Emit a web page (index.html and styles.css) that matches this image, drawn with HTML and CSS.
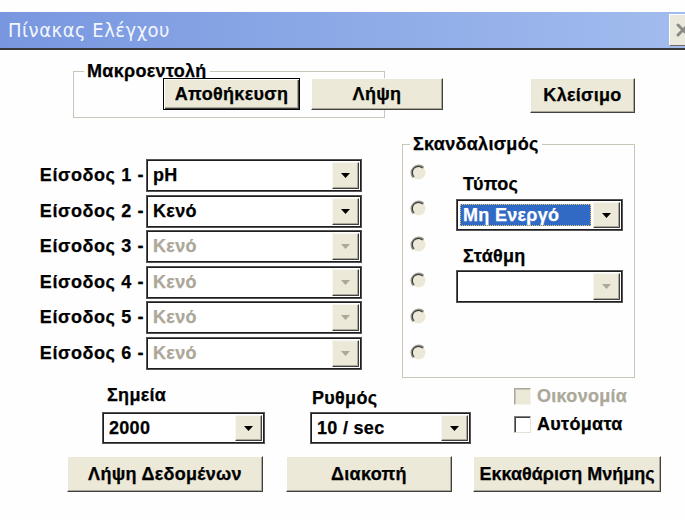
FILE: index.html
```html
<!DOCTYPE html>
<html lang="el">
<head>
<meta charset="utf-8">
<title>Πίνακας Ελέγχου</title>
<link rel="stylesheet" href="styles.css">
</head>
<body>
<div class="top-gap"></div>
<header class="titlebar">
  <span class="title">Πίνακας Ελέγχου</span>
  <span class="close" aria-label="Κλείσιμο">
    <svg width="14" height="14" viewBox="0 0 14 14"><path d="M2 2L12 12M12 2L2 12" stroke="#8a8a86" stroke-width="3" stroke-linecap="round"/></svg>
  </span>
</header>

<main class="dialog">
  <div class="top-row">
    <fieldset class="group macro">
      <legend>Μακροεντολή</legend>
      <div class="macro-body">
        <button class="btn default btn-save">Αποθήκευση</button>
        <button class="btn btn-load">Λήψη</button>
      </div>
    </fieldset>
    <button class="btn btn-close">Κλείσιμο</button>
  </div>

  <div class="main-row">
    <div class="inputs">
      <span class="in-label">Είσοδος 1 -</span>
      <div class="combo"><span class="combo-text">pH</span><span class="combo-btn"><svg width="9" height="5" viewBox="0 0 9 5"><path d="M0 0H9L4.5 5Z"/></svg></span></div>
      <span class="in-label">Είσοδος 2 -</span>
      <div class="combo"><span class="combo-text">Κενό</span><span class="combo-btn"><svg width="9" height="5" viewBox="0 0 9 5"><path d="M0 0H9L4.5 5Z"/></svg></span></div>
      <span class="in-label">Είσοδος 3 -</span>
      <div class="combo disabled"><span class="combo-text">Κενό</span><span class="combo-btn"><svg width="9" height="5" viewBox="0 0 9 5"><path d="M0 0H9L4.5 5Z"/></svg></span></div>
      <span class="in-label">Είσοδος 4 -</span>
      <div class="combo disabled"><span class="combo-text">Κενό</span><span class="combo-btn"><svg width="9" height="5" viewBox="0 0 9 5"><path d="M0 0H9L4.5 5Z"/></svg></span></div>
      <span class="in-label">Είσοδος 5 -</span>
      <div class="combo disabled"><span class="combo-text">Κενό</span><span class="combo-btn"><svg width="9" height="5" viewBox="0 0 9 5"><path d="M0 0H9L4.5 5Z"/></svg></span></div>
      <span class="in-label">Είσοδος 6 -</span>
      <div class="combo disabled"><span class="combo-text">Κενό</span><span class="combo-btn"><svg width="9" height="5" viewBox="0 0 9 5"><path d="M0 0H9L4.5 5Z"/></svg></span></div>
    </div>

    <fieldset class="group trigger">
      <legend>Σκανδαλισμός</legend>
      <div class="trigger-body">
        <div class="radios">
          <svg class="radio" width="17" height="17" viewBox="0 0 17 17"><circle cx="8.5" cy="8.5" r="7" fill="#ece9d8"/><path d="M3.2 13.8A7.5 7.5 0 0 1 13.8 3.2" fill="none" stroke="#9c9a90" stroke-width="1.3"/><path d="M4.1 12.9A6.2 6.2 0 0 1 12.9 4.1" fill="none" stroke="#3c3c3c" stroke-width="1.3"/></svg>
          <svg class="radio" width="17" height="17" viewBox="0 0 17 17"><circle cx="8.5" cy="8.5" r="7" fill="#ece9d8"/><path d="M3.2 13.8A7.5 7.5 0 0 1 13.8 3.2" fill="none" stroke="#9c9a90" stroke-width="1.3"/><path d="M4.1 12.9A6.2 6.2 0 0 1 12.9 4.1" fill="none" stroke="#3c3c3c" stroke-width="1.3"/></svg>
          <svg class="radio" width="17" height="17" viewBox="0 0 17 17"><circle cx="8.5" cy="8.5" r="7" fill="#ece9d8"/><path d="M3.2 13.8A7.5 7.5 0 0 1 13.8 3.2" fill="none" stroke="#9c9a90" stroke-width="1.3"/><path d="M4.1 12.9A6.2 6.2 0 0 1 12.9 4.1" fill="none" stroke="#3c3c3c" stroke-width="1.3"/></svg>
          <svg class="radio" width="17" height="17" viewBox="0 0 17 17"><circle cx="8.5" cy="8.5" r="7" fill="#ece9d8"/><path d="M3.2 13.8A7.5 7.5 0 0 1 13.8 3.2" fill="none" stroke="#9c9a90" stroke-width="1.3"/><path d="M4.1 12.9A6.2 6.2 0 0 1 12.9 4.1" fill="none" stroke="#3c3c3c" stroke-width="1.3"/></svg>
          <svg class="radio" width="17" height="17" viewBox="0 0 17 17"><circle cx="8.5" cy="8.5" r="7" fill="#ece9d8"/><path d="M3.2 13.8A7.5 7.5 0 0 1 13.8 3.2" fill="none" stroke="#9c9a90" stroke-width="1.3"/><path d="M4.1 12.9A6.2 6.2 0 0 1 12.9 4.1" fill="none" stroke="#3c3c3c" stroke-width="1.3"/></svg>
          <svg class="radio" width="17" height="17" viewBox="0 0 17 17"><circle cx="8.5" cy="8.5" r="7" fill="#ece9d8"/><path d="M3.2 13.8A7.5 7.5 0 0 1 13.8 3.2" fill="none" stroke="#9c9a90" stroke-width="1.3"/><path d="M4.1 12.9A6.2 6.2 0 0 1 12.9 4.1" fill="none" stroke="#3c3c3c" stroke-width="1.3"/></svg>
        </div>
        <div class="trigger-controls">
          <span class="t-label t-type">Τύπος</span>
          <div class="combo focused"><span class="combo-text"><span class="sel">Μη Ενεργό</span></span><span class="combo-btn"><svg width="9" height="5" viewBox="0 0 9 5"><path d="M0 0H9L4.5 5Z"/></svg></span></div>
          <span class="t-label t-level">Στάθμη</span>
          <div class="combo disabled level-combo"><span class="combo-text"></span><span class="combo-btn"><svg width="9" height="5" viewBox="0 0 9 5"><path d="M0 0H9L4.5 5Z"/></svg></span></div>
        </div>
      </div>
    </fieldset>
  </div>

  <div class="bottom-row">
    <div class="field points">
      <span class="f-label">Σημεία</span>
      <div class="combo"><span class="combo-text">2000</span><span class="combo-btn"><svg width="9" height="5" viewBox="0 0 9 5"><path d="M0 0H9L4.5 5Z"/></svg></span></div>
    </div>
    <div class="field rate">
      <span class="f-label">Ρυθμός</span>
      <div class="combo"><span class="combo-text">10 / sec</span><span class="combo-btn"><svg width="9" height="5" viewBox="0 0 9 5"><path d="M0 0H9L4.5 5Z"/></svg></span></div>
    </div>
    <div class="checks">
      <label class="check disabled"><span class="box"></span>Οικονομία</label>
      <label class="check"><span class="box"></span>Αυτόματα</label>
    </div>
  </div>

  <div class="actions">
    <button class="btn act act-get">Λήψη Δεδομένων</button>
    <button class="btn act act-stop">Διακοπή</button>
    <button class="btn act act-clear">Εκκαθάριση Μνήμης</button>
  </div>
</main>
</body>
</html>
```

FILE: styles.css
```css
* { box-sizing: border-box; }

body {
  margin: 0;
  width: 685px;
  height: 520px;
  overflow: hidden;
  background: #fefefe;
  color: #000;
  font-family: "Liberation Sans", Arial, sans-serif;
  font-weight: bold;
  font-size: 18px;
  letter-spacing: 0.3px;
  -webkit-text-stroke: 0.25px currentColor;
}

/* window caption */
.top-gap { height: 12px; }

.titlebar {
  height: 38px;
  display: flex;
  align-items: center;
  background: linear-gradient(to right, #7897df, #a2bcee);
  border-bottom: 2px solid #3a3a3a;
}

.title {
  padding-left: 8px;
  font-family: "DejaVu Sans", sans-serif;
  font-stretch: condensed;
  font-weight: normal;
  font-size: 20px;
  letter-spacing: 0.5px;
  -webkit-text-stroke: 0;
  color: #f3f6ff;
}

.close {
  margin-left: auto;
  margin-right: -11px;
  width: 27px;
  height: 32px;
  display: flex;
  align-items: center;
  justify-content: center;
  background: #ebe9de;
  border: 1px solid;
  border-color: #fff #6e6c62 #6e6c62 #fff;
}

/* push buttons */
.btn {
  flex-shrink: 0;
  display: flex;
  align-items: center;
  justify-content: center;
  padding: 0;
  font: inherit;
  letter-spacing: inherit;
  color: #000;
  background: #ece9d8;
  border: 1px solid;
  border-color: #fff #404040 #404040 #fff;
  box-shadow: inset -1px -1px 0 #aca899;
  white-space: nowrap;
}

.btn.default {
  border-color: #000;
  box-shadow: inset 1px 1px 0 #fff, inset -1px -1px 0 #404040, inset -2px -2px 0 #aca899;
}

/* group boxes */
.group {
  margin: 0;
  padding: 0;
  min-width: 0;
  border: 1px solid #c9c6b7;
  box-shadow: inset 1px 1px 0 #fff;
}

.group legend {
  padding: 0 3px;
  line-height: 20px;
}

.top-row {
  display: flex;
  align-items: flex-start;
}

.macro {
  margin: 11px 0 0 73px;
  width: 312px;
}

.macro legend { margin-left: 10px; }

.macro-body {
  display: flex;
  gap: 11px;
  margin-top: -3px;
  padding: 0 0 7px 89px;
}

.btn-save { width: 137px; height: 32px; }
.btn-load { width: 132px; height: 32px; }

.btn-close {
  margin: 28px 0 0 145px;
  width: 105px;
  height: 35px;
}

/* inputs and trigger */
.main-row {
  display: flex;
  align-items: flex-start;
  margin-top: 16px;
}

.inputs {
  display: grid;
  grid-template-columns: 146px 216px;
  grid-auto-rows: 33px;
  row-gap: 2.5px;
  margin-top: 25px;
}

.in-label {
  justify-self: end;
  align-self: center;
  padding-right: 2px;
  white-space: nowrap;
  letter-spacing: 0.6px;
}

/* drop-down lists */
.combo {
  display: flex;
  align-items: center;
  height: 33px;
  background: #fff;
  border: 1px solid #555;
  box-shadow: inset 0 0 0 1px #1e1e1e;
  padding: 2px;
}

.combo-text {
  flex: 1;
  align-self: stretch;
  display: flex;
  align-items: center;
  padding-left: 4px;
  white-space: nowrap;
  overflow: hidden;
}

.combo-btn {
  width: 27px;
  align-self: stretch;
  display: flex;
  align-items: center;
  justify-content: center;
  background: #ece9d8;
  border: 1px solid;
  border-color: #f7f6f0 #404040 #404040 #f7f6f0;
  box-shadow: inset -1px -1px 0 #aca899;
}

.combo-btn svg { fill: #000; }

.combo.disabled .combo-text { color: #aca899; }
.combo.disabled .combo-btn svg { fill: #aca899; }

.combo.focused .combo-text { padding: 2px 2px 2px 1px; }

.sel {
  flex: 1;
  align-self: stretch;
  display: flex;
  align-items: center;
  padding-left: 3px;
  color: #fff;
  background: #316ac5;
  outline: 1px dotted #e8c870;
  outline-offset: -1px;
}

.trigger {
  margin-left: 40px;
  width: 233px;
  height: 244px;
}

.trigger legend { margin-left: 7px; }

.trigger-body {
  display: flex;
  padding-left: 7px;
}

.radios {
  display: flex;
  flex-direction: column;
  gap: 19px;
  margin-top: 10px;
}

.radio { display: block; }

.trigger-controls {
  display: flex;
  flex-direction: column;
  width: 167px;
  margin-left: 29px;
}

.t-label {
  padding-left: 7px;
  line-height: 20px;
}

.t-type { margin-top: 20px; }
.t-level { margin-top: 15px; }
.trigger-controls .combo { height: 32px; margin-top: 5px; }
.trigger-controls .level-combo { height: 33px; margin-top: 4px; }

/* lower settings */
.bottom-row {
  display: flex;
  align-items: flex-start;
  margin-top: 7px;
}

.field {
  display: flex;
  flex-direction: column;
}

.f-label {
  padding-left: 5px;
  line-height: 20px;
}

.field .combo { height: 32px; margin-top: 7px; }

.points { margin-left: 102px; width: 163px; }
.rate { margin-left: 45px; width: 161px; }
.rate .f-label { margin-top: 3px; padding-left: 2px; }
.rate .combo { margin-top: 4px; }

.checks {
  display: flex;
  flex-direction: column;
  gap: 8px;
  margin: 1px 0 0 43px;
}

.check {
  display: flex;
  align-items: center;
  gap: 6px;
  line-height: 20px;
}

.box {
  width: 17px;
  height: 17px;
  background: #fff;
  border: 1px solid;
  border-color: #808080 #e4e2d8 #e4e2d8 #808080;
  box-shadow: inset 1px 1px 0 #404040;
}

.check.disabled { color: #aca899; }

.check.disabled .box {
  background: #ece9d8;
  border-color: #aca899 #f4f3ee #f4f3ee #aca899;
  box-shadow: inset 1px 1px 0 #c8c5b8;
}

/* command buttons */
.actions {
  display: flex;
  margin-top: 12px;
}

.act { height: 36px; }
.act-get { margin-left: 67px; width: 196px; }
.act-stop { margin-left: 23px; width: 166px; }
.act-clear { margin-left: 21px; width: 188px; letter-spacing: 0; }
```
